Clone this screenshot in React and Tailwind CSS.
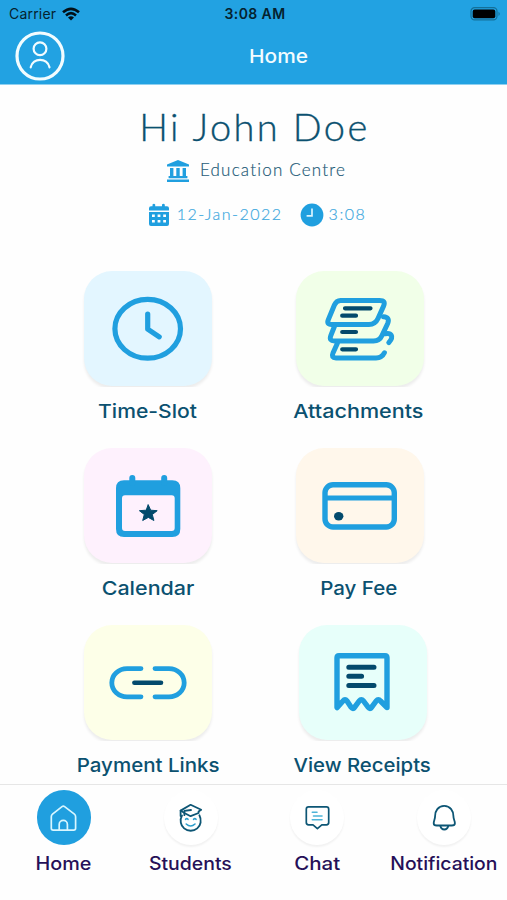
const BLUE = "#209fdf";
const NAVY = "#034a6c";

function TimeIcon() {
  return (
    <g strokeWidth="5.2">
      <ellipse cx="63.7" cy="57.8" rx="32.8" ry="29.4" />
      <path d="M63.7 43V58.2L75.2 65.8" />
    </g>
  );
}

function AttachmentsIcon() {
  return (
    <>
      <g strokeWidth="5">
        <path d="M44.5 29.4H83.5Q90 29.4 87.6 35L82 47.5Q79.2 53.4 73 53.4H35.5Q30.2 53.4 32.4 48.4L38.4 34Q40.4 29.4 44.5 29.4Z" />
        <path d="M38.4 55.5L34.8 64.6Q32.8 70 38.5 70H77.5Q83.6 70 86 64.6L91.8 52.2Q94 46.4 87.5 45.8" />
        <path d="M41.3 72.5L37 82Q34.8 86.9 40 86.9H80Q86 86.9 88.4 81.8" />
        <path d="M89 62.8C95 61.4 98.5 65 92.8 71.6" />
      </g>
      <g stroke={NAVY} strokeWidth="4.2">
        <path d="M49 37.3H74.5M46.2 44.7H60M46.2 61H60M46.2 78.3H60" />
      </g>
    </>
  );
}

function CalendarIcon() {
  return (
    <>
      <path stroke="none" fill={BLUE} fillRule="evenodd" d="M40 32.3H88.3Q96.3 32.3 96.3 40.3V81Q96.3 89 88.3 89H40Q32 89 32 81V40.3Q32 32.3 40 32.3ZM41 47.3Q38 47.3 38 50.3V80Q38 83 41 83H87.7Q90.7 83 90.7 80V50.3Q90.7 47.3 87.7 47.3Z" />
      <path strokeWidth="6" d="M48.3 30V35M80.2 30V35" />
      <path fill={NAVY} stroke={NAVY} strokeWidth="1" d="M64.3 56.9L66.7 62.2L73.2 62.7L68.3 66.5L69.9 72.5L64.3 69.4L58.7 72.5L60.3 66.5L55.4 62.7L61.9 62.2Z" />
    </>
  );
}

function CardIcon() {
  return (
    <>
      <rect x="29" y="36.7" width="69.3" height="42.3" rx="8" strokeWidth="5.4" />
      <path d="M29 50H98" strokeWidth="5.2" strokeLinecap="butt" />
      <ellipse cx="42.7" cy="68.3" rx="4.7" ry="4.2" fill={NAVY} stroke="none" />
    </>
  );
}

function LinkIcon() {
  return (
    <>
      <path strokeWidth="4.8" d="M57 43.6H43A15.2 14.1 0 0 0 43 71.8H57M71 43.6H85A15.2 14.1 0 0 1 85 71.8H71" />
      <path stroke={NAVY} strokeWidth="4.6" d="M50.4 57.7H77" />
    </>
  );
}

function ReceiptIcon() {
  return (
    <>
      <path strokeWidth="5.4" d="M38 82.6V32.7Q38 30.7 40 30.7H86Q88 30.7 88 32.7V82.6L81.5 76Q79.3 73.6 77.2 76L72.5 82.4Q71 84.6 69.3 82.4L64.5 76Q62.3 73.6 60.2 76L55.5 82.4Q54 84.6 52.3 82.4L48 76Q46 73.6 44 76Z" />
      <path stroke={NAVY} strokeWidth="5" d="M49.8 42.2H75M49.8 51.3H62.6M49.8 60.4H75" />
    </>
  );
}

const tiles = [
  { label: "Time-Slot", Icon: TimeIcon, bg: "bg-[#e3f6ff]", text: "scale-x-[1.11]", shift: "" },
  { label: "Attachments", Icon: AttachmentsIcon, bg: "bg-[#f1ffe8]", text: "mr-[2px] scale-x-[1.135]", shift: "" },
  { label: "Calendar", Icon: CalendarIcon, bg: "bg-[#fef1fd]", text: "scale-x-[1.13]", shift: "" },
  { label: "Pay Fee", Icon: CardIcon, bg: "bg-[#fff7eb]", text: "mr-[2px] scale-x-[1.08]", shift: "" },
  { label: "Payment Links", Icon: LinkIcon, bg: "bg-[#fdffe8]", text: "scale-x-[1.08]", shift: "" },
  { label: "View Receipts", Icon: ReceiptIcon, bg: "bg-[#e7fffa]", text: "mr-[2px] scale-x-[1.07]", shift: "ml-[7px]" },
];

function Tile({ label, Icon, bg, text, shift }) {
  return (
    <div className={`flex flex-col items-center ${shift}`}>
      <div className="h-[116px] w-[132px] overflow-hidden px-[2px]">
        <div className={`h-[115px] w-[128px] rounded-[28px] shadow-[0_3px_3px_rgba(0,0,0,0.07)] ${bg}`}>
          <svg viewBox="0 0 128 115" width="128" height="115" fill="none" stroke={BLUE} strokeLinecap="round" strokeLinejoin="round">
            <Icon />
          </svg>
        </div>
      </div>
      <div className={`mt-[11px] h-[28px] text-[19px] leading-[28px] font-[470] whitespace-nowrap text-[#0b5170] ${text}`}>{label}</div>
    </div>
  );
}

function HomeIcon() {
  return (
    <g stroke="#d8f6ff" strokeWidth="1.7">
      <path d="M25 16.6Q26.3 15.6 27.6 16.6L37.4 24.2Q38.6 25.2 38.6 26.8V38.3Q38.6 40.2 36.7 40.2H16.2Q14.3 40.2 14.3 38.3V26.8Q14.3 25.2 15.5 24.2Z" />
      <path d="M22.2 40V34.5A4.1 4.1 0 0 1 30.4 34.5V40" />
    </g>
  );
}

function StudentIcon() {
  return (
    <g stroke="#0d5675" strokeWidth="1.8">
      <path d="M18 25.5Q16 29 16.8 32.5A10 9.6 0 0 0 36.6 32.5Q37.2 28.5 35.4 25.2M26.6 14.8L37.2 19.8L34.6 21.6V23L26.6 26.2L20.8 23.2L16.6 20.6Z" />
      <path d="M16.6 20.6V26M27 20L20.4 20.8V25.2" />
      <path d="M21.6 29.3Q22.8 28 24 29.3M29.6 29.3Q30.8 28 32 29.3M22.2 34Q26.6 38 31 34" stroke="#2b9dcb" strokeWidth="1.6" />
    </g>
  );
}

function ChatIcon() {
  return (
    <g stroke="#0d5675" strokeWidth="1.7">
      <path d="M18.6 16.9H36.4Q38.7 16.9 38.7 19.2V32.6Q38.7 34.9 36.4 34.9H31.8L27.4 38.6L23 34.9H18.6Q16.3 34.9 16.3 32.6V19.2Q16.3 16.9 18.6 16.9Z" />
      <path d="M22.3 22.3H27M23.5 26H32M22.3 29.7H32" stroke="#4db4d8" strokeWidth="1.6" />
    </g>
  );
}

function BellIcon() {
  return (
    <g stroke="#0d5675" strokeWidth="1.8">
      <path d="M27.2 15.9C21 15.9 18.1 21 18.1 26C18.1 29.2 16.7 31 16.7 33.2C16.7 35 18.1 35.5 19.7 35.5H34.7C36.3 35.5 37.9 35 37.9 33.2C37.9 31 36.4 29.2 36.4 26C36.4 21 33.4 15.9 27.2 15.9Z" />
      <path d="M23.3 35.8Q24.1 39.5 27.3 39.5T31.3 35.8" />
    </g>
  );
}

const tabs = [
  { label: "Home", Icon: HomeIcon, circle: "bg-[#209fdf]", text: "scale-x-[1.1]" },
  { label: "Students", Icon: StudentIcon, circle: "bg-white shadow-[0_2px_2px_rgba(0,0,0,0.05)]", text: "scale-x-[1.08]" },
  { label: "Chat", Icon: ChatIcon, circle: "bg-white shadow-[0_2px_2px_rgba(0,0,0,0.05)]", text: "scale-x-[1.14]" },
  { label: "Notification", Icon: BellIcon, circle: "bg-white shadow-[0_2px_2px_rgba(0,0,0,0.05)]", text: "scale-x-[1.075]" },
];

function Header() {
  return (
    <header className="h-[85px] border-b border-[#8fd0f0] bg-[#22a2e2]">
      <div className="grid h-[27px] grid-cols-3 items-center pr-[6px] pl-[9px] text-[14px] text-[#05222f]">
        <div className="flex items-center gap-[6px]">
          <span className="tracking-[0.2px]">Carrier</span>
          <svg width="18" height="14" viewBox="0 0 18 14" fill="none" stroke="#021018" strokeWidth="2.6">
            <path d="M1 5.3Q9 -1.7 17 5.3M4 8.4Q9 4 14 8.4" />
            <path d="M9 13.4L6 10.5Q9 8 12 10.5Z" fill="#021018" stroke="none" />
          </svg>
        </div>
        <div className="text-center font-semibold tracking-[0.4px] whitespace-nowrap">3:08 AM</div>
        <svg className="justify-self-end" width="31" height="14" viewBox="0 0 31 14">
          <rect x="1" y="0.7" width="26" height="12.2" rx="3.6" fill="none" stroke="#147099" strokeWidth="1.2" />
          <rect x="2.7" y="2.4" width="22.6" height="8.8" rx="2" fill="#000" />
          <path d="M28.5 4.7Q31 6.8 28.5 8.9Z" fill="#147099" />
        </svg>
      </div>
      <div className="grid h-[58px] grid-cols-[50px_1fr_49px] items-center pl-[15px]">
        <svg width="50" height="50" viewBox="0 0 50 50" fill="none" stroke="#f2fcff" strokeLinecap="round">
          <circle cx="25" cy="25" r="23" strokeWidth="3.2" />
          <circle cx="25" cy="17.8" r="6.4" strokeWidth="2.2" />
          <path d="M15.7 36.3C17.8 26.3 32.4 26.3 34.5 36.3" strokeWidth="2.2" />
        </svg>
        <div className="scale-x-[1.1] pt-[2px] pl-[31px] text-center text-[19px] font-[470] text-[#f2fcff]">Home</div>
      </div>
    </header>
  );
}

function Greeting() {
  return (
    <section className="flex flex-col items-center font-['Lato','Open_Sans',sans-serif] font-light whitespace-nowrap">
      <h1 className="mt-[16px] h-[50px] pl-[2px] text-[38px] leading-[50px] tracking-[2.4px] text-[#0b5170] [-webkit-text-stroke:0.35px_#0b5170]">Hi John Doe</h1>
      <div className="mt-[6px] flex h-[28px] items-center gap-[10px] pl-[5px] text-[17px] tracking-[1.2px] text-[#1f5b78] [-webkit-text-stroke:0.2px_#1f5b78]">
        <svg width="24" height="24" viewBox="0 0 24 24" fill={BLUE}>
          <path d="M12 1L23 5.6V7.6H1V5.6ZM4 9H7.4V17H4ZM10.3 9H13.7V17H10.3ZM16.6 9H20V17H16.6ZM2.6 17H21.4V19.2H2.6ZM1 20.5H23V23H1Z" />
        </svg>
        <span className="pb-[3px]">Education Centre</span>
      </div>
      <div className="mt-[16px] flex h-[28px] items-center pl-[7px] text-[16px] text-[#3fa9de] [-webkit-text-stroke:0.2px_#3fa9de]">
        <svg width="22" height="24" viewBox="0 0 22 24" fill={BLUE} fillRule="evenodd">
          <path d="M4.5 1.5Q6 0 7.2 1.5V3.2H14V1.5Q15.4 0 16.8 1.5V3.2H19Q21 3.2 21 5.2V7.5H1V5.2Q1 3.2 3 3.2H4.5ZM1 9H21V21Q21 23 19 23H3Q1 23 1 21ZM4 11.5V14H6.8V11.5ZM9.6 11.5V14H12.4V11.5ZM15.2 11.5V14H18V11.5ZM4 17V19.5H6.8V17ZM9.6 17V19.5H12.4V17ZM15.2 17V19.5H18V17Z" />
        </svg>
        <span className="ml-[7px] pb-[2px] tracking-[1.5px]">12-Jan-2022</span>
        <svg className="ml-[17px]" width="24" height="24" viewBox="0 0 24 24">
          <circle cx="12" cy="12" r="11.4" fill={BLUE} />
          <path d="M12 5.4V12.8H6.6" fill="none" stroke="#d9f4ff" strokeWidth="1.7" />
        </svg>
        <span className="ml-[5px] pb-[2px] tracking-[1.5px]">3:08</span>
      </div>
    </section>
  );
}

export default function App() {
  return (
    <div className="flex h-[900px] w-[507px] flex-col overflow-hidden bg-[#fefefe] font-['Inter','Liberation_Sans',sans-serif]">
      <Header />
      <main className="h-[699px]">
        <Greeting />
        <div className="ml-[42px] mt-[42px] grid grid-cols-[212px_211px] gap-y-[22px]">
          {tiles.map((t) => (
            <Tile key={t.label} {...t} />
          ))}
        </div>
      </main>
      <nav className="grid h-[116px] grid-cols-4 border-t border-[#e6e6e6] pt-[5px]">
        {tabs.map(({ label, Icon, circle, text }) => (
          <div key={label} className="flex flex-col items-center pl-px">
            <div className={`h-[55px] w-[54px] rounded-full ${circle}`}>
              <svg width="54" height="55" viewBox="0 0 54 55" fill="none" strokeLinecap="round" strokeLinejoin="round">
                <Icon />
              </svg>
            </div>
            <span className={`mt-[5px] text-[18px] leading-[28px] font-[470] whitespace-nowrap text-[#261058] ${text}`}>{label}</span>
          </div>
        ))}
      </nav>
    </div>
  );
}
